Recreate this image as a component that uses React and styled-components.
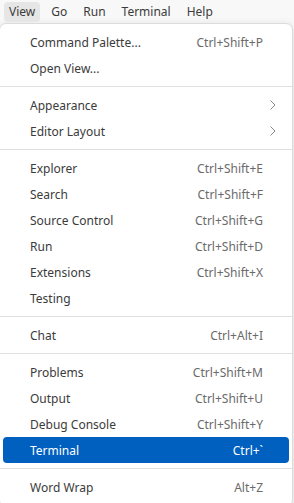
import React from "react";
import styled, { createGlobalStyle } from "styled-components";

const GlobalStyle = createGlobalStyle`
  html, body {
    margin: 0;
    padding: 0;
    background: #f8f8f8;
    font-family: "Noto Sans", "Open Sans", sans-serif;
    overflow: hidden;
  }
`;

const menuBarItems = ["View", "Go", "Run", "Terminal", "Help"];

const groups = [
  [
    { label: "Command Palette...", keys: "Ctrl+Shift+P" },
    { label: "Open View..." },
  ],
  [
    { label: "Appearance", submenu: true },
    { label: "Editor Layout", submenu: true },
  ],
  [
    { label: "Explorer", keys: "Ctrl+Shift+E" },
    { label: "Search", keys: "Ctrl+Shift+F" },
    { label: "Source Control", keys: "Ctrl+Shift+G" },
    { label: "Run", keys: "Ctrl+Shift+D" },
    { label: "Extensions", keys: "Ctrl+Shift+X" },
    { label: "Testing" },
  ],
  [{ label: "Chat", keys: "Ctrl+Alt+I" }],
  [
    { label: "Problems", keys: "Ctrl+Shift+M" },
    { label: "Output", keys: "Ctrl+Shift+U" },
    { label: "Debug Console", keys: "Ctrl+Shift+Y" },
    { label: "Terminal", keys: "Ctrl+`", active: true },
  ],
  [{ label: "Word Wrap", keys: "Alt+Z" }],
];

function Chevron() {
  return (
    <svg width="8" height="12" viewBox="0 0 8 12" fill="none">
      <path d="M1.5 1.5 L6 6 L1.5 10.5" stroke="#7a7a7a" strokeWidth="0.9" />
    </svg>
  );
}

function App() {
  return (
    <>
      <GlobalStyle />
      <MenuBar>
        {menuBarItems.map((name, i) => (
          <BarItem key={name} $open={i === 0}>
            {name}
          </BarItem>
        ))}
      </MenuBar>
      <Dropdown>
        {groups.map((group, gi) => (
          <React.Fragment key={gi}>
            {gi > 0 && <Separator />}
            {group.map((item) => (
              <Row key={item.label} $active={item.active}>
                <Label>{item.label}</Label>
                {item.keys && <Keys $active={item.active}>{item.keys}</Keys>}
                <Trail>{item.submenu && <Chevron />}</Trail>
              </Row>
            ))}
          </React.Fragment>
        ))}
      </Dropdown>
    </>
  );
}

const MenuBar = styled.div`
  display: flex;
  align-items: center;
  height: 23px;
  padding-left: 4px;
  gap: 6px;
`;

const BarItem = styled.div`
  height: 20px;
  line-height: 20px;
  padding: 0 5px;
  border-radius: 4px;
  font-size: 12px;
  color: #3b3b3b;
  background: ${(p) => (p.$open ? "#e6e6e6" : "transparent")};
`;

const Dropdown = styled.div`
  width: 294px;
  margin-left: -1px;
  box-sizing: border-box;
  background: #ffffff;
  border: 1px solid #dcdcdc;
  border-radius: 7px;
  padding: 5px 0 6px;
  box-shadow: 0 2px 8px rgba(0, 0, 0, 0.12);
`;

const Row = styled.div`
  display: flex;
  align-items: center;
  height: 26px;
  margin: 0 3px;
  padding-left: 27px;
  border-radius: 4px;
  font-size: 12px;
  color: ${(p) => (p.$active ? "#ffffff" : "#3b3b3b")};
  background: ${(p) => (p.$active ? "#0060c0" : "transparent")};
`;

const Label = styled.span`
  flex: 1;
  white-space: nowrap;
`;

const Keys = styled.span`
  color: ${(p) => (p.$active ? "#ffffff" : "#6a6a6a")};
  white-space: nowrap;
`;

const Trail = styled.span`
  display: flex;
  align-items: center;
  width: 26px;
  padding-left: 6px;
  box-sizing: border-box;
`;

const Separator = styled.div`
  height: 1px;
  margin: 5px 0;
  background: #e0e0e0;
`;

export default App;
